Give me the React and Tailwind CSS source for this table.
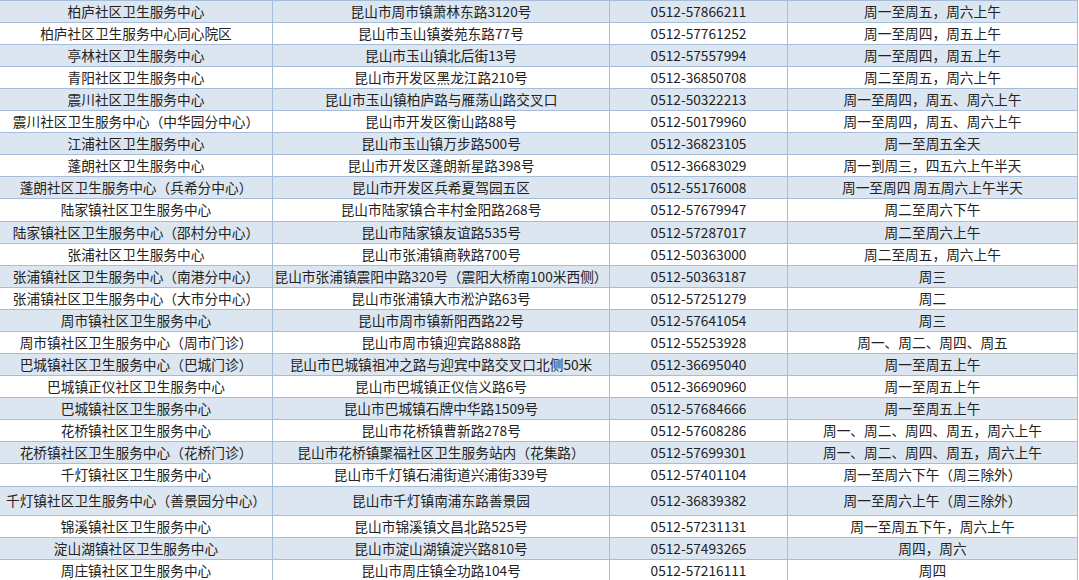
const rows = [
  ["柏庐社区卫生服务中心", "昆山市周市镇萧林东路3120号", "0512-57866211", "周一至周五，周六上午"],
  ["柏庐社区卫生服务中心同心院区", "昆山市玉山镇娄苑东路77号", "0512-57761252", "周一至周四，周五上午"],
  ["亭林社区卫生服务中心", "昆山市玉山镇北后街13号", "0512-57557994", "周一至周四，周五上午"],
  ["青阳社区卫生服务中心", "昆山市开发区黑龙江路210号", "0512-36850708", "周二至周五，周六上午"],
  ["震川社区卫生服务中心", "昆山市玉山镇柏庐路与雁荡山路交叉口", "0512-50322213", "周一至周四，周五、周六上午"],
  ["震川社区卫生服务中心（中华园分中心）", "昆山市开发区衡山路88号", "0512-50179960", "周一至周四，周五、周六上午"],
  ["江浦社区卫生服务中心", "昆山市玉山镇万步路500号", "0512-36823105", "周一至周五全天"],
  ["蓬朗社区卫生服务中心", "昆山市开发区蓬朗新星路398号", "0512-36683029", "周一到周三，四五六上午半天"],
  ["蓬朗社区卫生服务中心（兵希分中心）", "昆山市开发区兵希夏驾园五区", "0512-55176008", "周一至周四 周五周六上午半天"],
  ["陆家镇社区卫生服务中心", "昆山市陆家镇合丰村金阳路268号", "0512-57679947", "周二至周六下午"],
  ["陆家镇社区卫生服务中心（邵村分中心）", "昆山市陆家镇友谊路535号", "0512-57287017", "周二至周六上午"],
  ["张浦社区卫生服务中心", "昆山市张浦镇商鞅路700号", "0512-50363000", "周二至周五，周六上午"],
  ["张浦镇社区卫生服务中心（南港分中心）", "昆山市张浦镇震阳中路320号（震阳大桥南100米西侧）", "0512-50363187", "周三"],
  ["张浦镇社区卫生服务中心（大市分中心）", "昆山市张浦镇大市淞沪路63号", "0512-57251279", "周二"],
  ["周市镇社区卫生服务中心", "昆山市周市镇新阳西路22号", "0512-57641054", "周三"],
  ["周市镇社区卫生服务中心（周市门诊）", "昆山市周市镇迎宾路888路", "0512-55253928", "周一、周二、周四、周五"],
  ["巴城镇社区卫生服务中心（巴城门诊）", "昆山市巴城镇祖冲之路与迎宾中路交叉口北侧50米", "0512-36695040", "周一至周五上午"],
  ["巴城镇正仪社区卫生服务中心", "昆山市巴城镇正仪信义路6号", "0512-36690960", "周一至周五上午"],
  ["巴城镇社区卫生服务中心", "昆山市巴城镇石牌中华路1509号", "0512-57684666", "周一至周五上午"],
  ["花桥镇社区卫生服务中心", "昆山市花桥镇曹新路278号", "0512-57608286", "周一、周二、周四、周五，周六上午"],
  ["花桥镇社区卫生服务中心（花桥门诊）", "昆山市花桥镇聚福社区卫生服务站内（花集路）", "0512-57699301", "周一、周二、周四、周五，周六上午"],
  ["千灯镇社区卫生服务中心", "昆山市千灯镇石浦街道兴浦街339号", "0512-57401104", "周一至周六下午（周三除外）"],
  ["千灯镇社区卫生服务中心（善景园分中心）", "昆山市千灯镇南浦东路善景园", "0512-36839382", "周一至周六上午（周三除外）"],
  ["锦溪镇社区卫生服务中心", "昆山市锦溪镇文昌北路525号", "0512-57231131", "周一至周五下午，周六上午"],
  ["淀山湖镇社区卫生服务中心", "昆山市淀山湖镇淀兴路810号", "0512-57493265", "周四，周六"],
  ["周庄镇社区卫生服务中心", "昆山市周庄镇全功路104号", "0512-57216111", "周四"],
];

export default function App() {
  return (
    <div
      className="w-[1079px] h-[580px] overflow-hidden bg-white text-[#222] text-[13.7px] leading-none"
      style={{ fontFamily: '"Noto Sans CJK SC", "Noto Sans", sans-serif' }}
    >
      <div className="w-[1078px] border-t border-[#a7bcd9]">
        {rows.map((r, i) => (
          <div
            key={i}
            className={`grid grid-cols-[273px_337px_178px_290px] border-b border-[#a7bcd9] ${
              i === 22 ? "h-[29px]" : i === 21 || i === 9 ? "h-[23px]" : "h-[22px]"
            } ${i % 2 === 0 ? "bg-[#dce6f1]" : "bg-white"}`}
          >
            {r.map((c, j) => (
              <div
                key={j}
                className="flex items-center justify-center whitespace-nowrap border-r border-[#a7bcd9]"
              >
                {c}
              </div>
            ))}
          </div>
        ))}
      </div>
    </div>
  );
}
